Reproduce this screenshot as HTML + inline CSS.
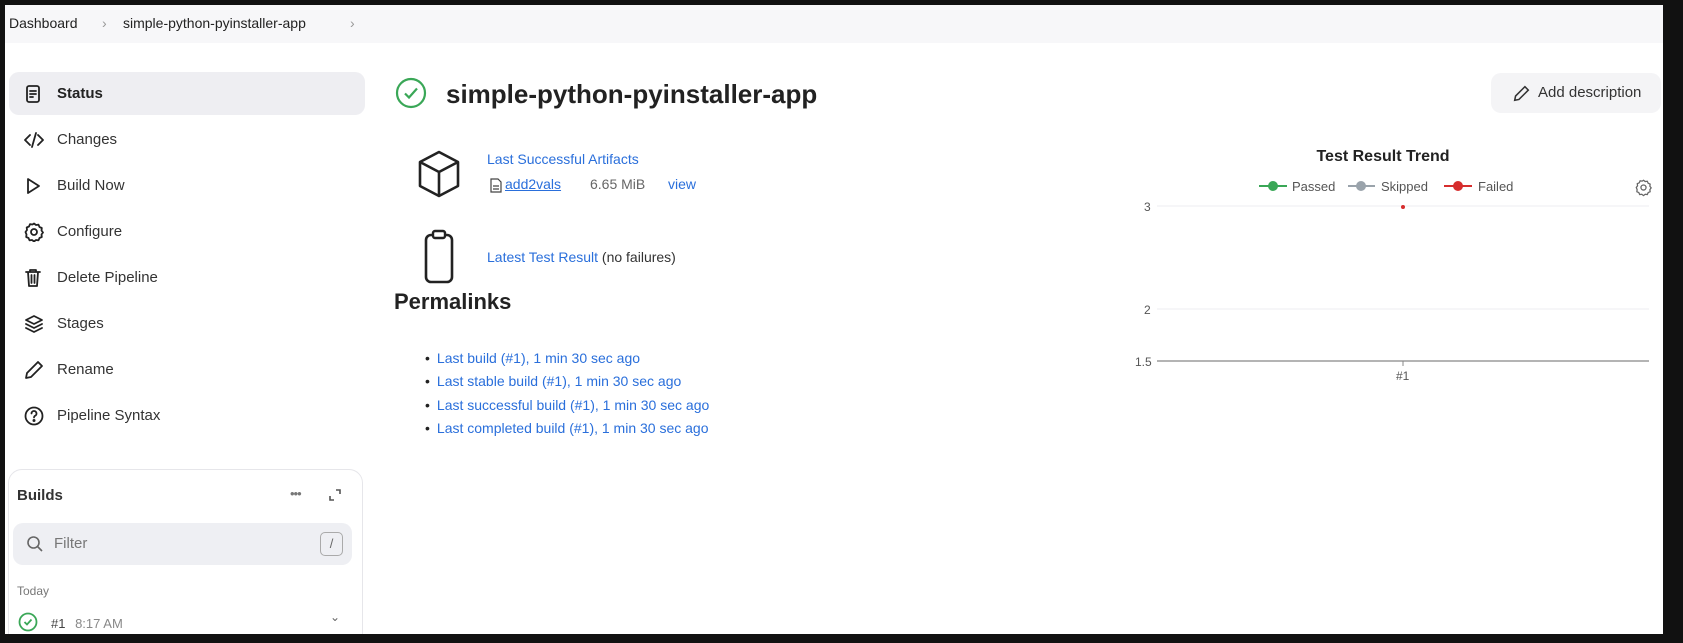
<!DOCTYPE html>
<html><head><meta charset="utf-8"><style>
*{box-sizing:border-box;margin:0;padding:0}
body{width:1683px;height:643px;background:#111;font-family:"Liberation Sans",sans-serif;color:#222;position:relative;overflow:hidden}
.page{position:absolute;left:5px;top:5px;width:1658px;height:629px;background:#fff;overflow:hidden}
.abs{position:absolute}
.bc{position:absolute;left:0;top:0;width:100%;height:38px;background:#f7f7f9;font-size:14px;color:#222}
.bc span{position:absolute;top:10px}
.nav{position:absolute;left:4px;width:356px;height:43px;display:flex;align-items:center;font-size:15px;color:#333}
.nav svg{position:absolute;left:15px}
.nav .t{position:absolute;left:48px}
a,.lk{color:#2a6fdb;text-decoration:none}
.ic{fill:none;stroke:#222;stroke-width:1.8;stroke-linecap:round;stroke-linejoin:round}
</style></head><body>
<div class="page">
<div class="bc"><span style="left:4px">Dashboard</span><span style="left:97px;color:#999">&#8250;</span><span style="left:118px">simple-python-pyinstaller-app</span><span style="left:345px;color:#999">&#8250;</span></div>

<div class="abs" style="left:4px;top:67px;width:356px;height:43px;background:#eeeef2;border-radius:10px"></div>
<div class="nav" style="top:67px"><svg width="18" height="20" viewBox="0 0 18 20" class="ic"><rect x="3" y="2" width="12" height="16" rx="2"/><path d="M6 7h6M6 10h6M6 13h3"/></svg><span class="t" style="font-weight:bold;color:#222">Status</span></div>
<div class="nav" style="top:113px"><svg width="20" height="20" viewBox="0 0 20 20" class="ic"><path d="M6 5L1 10l5 5M14 5l5 5-5 5M12 3L8 17"/></svg><span class="t">Changes</span></div>
<div class="nav" style="top:159px"><svg width="18" height="20" viewBox="0 0 18 20" class="ic"><path d="M4 3l11 7-11 7z"/></svg><span class="t">Build Now</span></div>
<div class="nav" style="top:205px"><svg width="20" height="20" viewBox="0 0 20 20" class="ic"><path d="M10 1.5l2 1.5 2.5-.3 1 2.3 2.3 1-.3 2.5 1.5 2-1.5 2 .3 2.5-2.3 1-1 2.3-2.5-.3-2 1.5-2-1.5-2.5.3-1-2.3-2.3-1 .3-2.5L1.5 10 3 8l-.3-2.5 2.3-1 1-2.3 2.5.3z"/><circle cx="10" cy="10" r="3"/></svg><span class="t">Configure</span></div>
<div class="nav" style="top:251px"><svg width="18" height="20" viewBox="0 0 18 20" class="ic"><path d="M2 4h14M6 4V2h6v2M4 4l1 14h8l1-14M7.5 7v8M10.5 7v8"/></svg><span class="t">Delete Pipeline</span></div>
<div class="nav" style="top:297px"><svg width="20" height="20" viewBox="0 0 20 20" class="ic"><path d="M10 2l8 4-8 4-8-4zM2 10l8 4 8-4M2 14l8 4 8-4"/></svg><span class="t">Stages</span></div>
<div class="nav" style="top:343px"><svg width="20" height="20" viewBox="0 0 20 20" class="ic"><path d="M14 2l4 4L7 17l-5 1 1-5z"/></svg><span class="t">Rename</span></div>
<div class="nav" style="top:389px"><svg width="20" height="20" viewBox="0 0 20 20" class="ic"><circle cx="10" cy="10" r="8.5"/><path d="M7.5 7.5a2.5 2.5 0 1 1 3.5 2.3c-.7.4-1 .9-1 1.7"/><circle cx="10" cy="14.5" r=".6" fill="#222"/></svg><span class="t">Pipeline Syntax</span></div>

<div class="abs" style="left:3px;top:464px;width:355px;height:200px;border:1px solid #e6e6ea;border-radius:14px"></div>
<div class="abs" style="left:12px;top:482px;font-size:15px;font-weight:bold;color:#333">Builds</div>
<div class="abs" style="left:285px;top:481px;font-size:13px;color:#777;letter-spacing:-1px">&#8226;&#8226;&#8226;</div>
<svg class="abs" style="left:323px;top:483px" width="14" height="14" viewBox="0 0 14 14"><path d="M8 2h4v4M6 12H2V8" fill="none" stroke="#555" stroke-width="1.6"/></svg>
<div class="abs" style="left:8px;top:518px;width:339px;height:42px;background:#eeeff3;border-radius:10px"></div>
<svg class="abs" style="left:21px;top:530px" width="18" height="18" viewBox="0 0 18 18"><circle cx="7.5" cy="7.5" r="5.5" fill="none" stroke="#666" stroke-width="1.6"/><path d="M11.5 11.5L16 16" stroke="#666" stroke-width="1.6"/></svg>
<div class="abs" style="left:49px;top:530px;font-size:15px;color:#777">Filter</div>
<div class="abs" style="left:315px;top:527px;width:23px;height:24px;border:1.5px solid #aaa;border-radius:5px;font-size:13px;color:#666;text-align:center;line-height:21px">/</div>
<div class="abs" style="left:12px;top:579px;font-size:12px;color:#777">Today</div>
<svg class="abs" style="left:13px;top:607px" width="20" height="20" viewBox="0 0 20 20"><circle cx="10" cy="10" r="8.5" fill="none" stroke="#3aa757" stroke-width="1.8"/><path d="M6.5 10l2.5 2.5 4.5-5" fill="none" stroke="#3aa757" stroke-width="1.8"/></svg>
<div class="abs" style="left:46px;top:611px;font-size:13px;color:#444">#1 <span style="color:#888;margin-left:6px">8:17 AM</span></div>
<div class="abs" style="left:325px;top:605px;font-size:12px;color:#666">&#8964;</div>

<svg class="abs" style="left:390px;top:72px" width="32" height="32" viewBox="0 0 32 32"><circle cx="16" cy="16" r="14" fill="none" stroke="#3aa757" stroke-width="2.2"/><path d="M10 16.5l4 4 8-9" fill="none" stroke="#3aa757" stroke-width="2.2"/></svg>
<div class="abs" style="left:441px;top:74px;font-size:26px;font-weight:bold;color:#222">simple-python-pyinstaller-app</div>
<div class="abs" style="left:1486px;top:68px;width:170px;height:40px;background:#f4f4f6;border-radius:10px"></div>
<svg class="abs" style="left:1508px;top:80px" width="17" height="17" viewBox="0 0 20 20" class="ic"><path d="M14 2l4 4L7 17l-5 1 1-5z" fill="none" stroke="#333" stroke-width="1.8"/></svg>
<div class="abs" style="left:1533px;top:79px;font-size:15px;color:#333">Add description</div>

<svg class="abs" style="left:411px;top:144px" width="46" height="50" viewBox="0 0 46 50"><path d="M23 3L42 13v24L23 47 4 37V13zM4 13l19 10 19-10M23 23v24" fill="none" stroke="#222" stroke-width="2.6" stroke-linejoin="round"/></svg>
<div class="abs lk" style="left:482px;top:146px;font-size:14px">Last Successful Artifacts</div>
<svg class="abs" style="left:485px;top:173px" width="12" height="15" viewBox="0 0 12 15"><path d="M1 1h7l3 3v10H1zM3 8h6M3 11h6" fill="none" stroke="#444" stroke-width="1.2"/></svg>
<div class="abs lk" style="left:500px;top:171px;font-size:14px;text-decoration:underline">add2vals</div>
<div class="abs" style="left:585px;top:171px;font-size:14px;color:#666">6.65 MiB</div>
<div class="abs lk" style="left:663px;top:171px;font-size:14px">view</div>

<svg class="abs" style="left:418px;top:224px" width="32" height="56" viewBox="0 0 32 56"><rect x="3" y="6" width="26" height="47" rx="5" fill="none" stroke="#222" stroke-width="2.6"/><rect x="10" y="2" width="12" height="7" rx="2" fill="#fff" stroke="#222" stroke-width="2.4"/></svg>
<div class="abs" style="left:482px;top:244px;font-size:14px;color:#333"><span class="lk">Latest Test Result</span> (no failures)</div>
<div class="abs" style="left:389px;top:284px;font-size:22px;font-weight:bold;color:#222">Permalinks</div>
<div class="abs" style="left:420px;top:342px;font-size:14px;line-height:23.3px">
<div><span style="color:#222;margin-right:7px">&#8226;</span><span class="lk">Last build (#1), 1 min 30 sec ago</span></div>
<div><span style="color:#222;margin-right:7px">&#8226;</span><span class="lk">Last stable build (#1), 1 min 30 sec ago</span></div>
<div><span style="color:#222;margin-right:7px">&#8226;</span><span class="lk">Last successful build (#1), 1 min 30 sec ago</span></div>
<div><span style="color:#222;margin-right:7px">&#8226;</span><span class="lk">Last completed build (#1), 1 min 30 sec ago</span></div>
</div>

<div class="abs" style="left:1278px;top:143px;width:200px;text-align:center;font-size:16px;font-weight:bold;color:#222">Test Result Trend</div>
<svg class="abs" style="left:1100px;top:165px" width="560" height="210">
<g font-family="Liberation Sans" font-size="13" fill="#555">
<line x1="154" y1="16" x2="182" y2="16" stroke="#3aa757" stroke-width="2"/><circle cx="168" cy="16" r="5" fill="#3aa757"/><text x="187" y="21">Passed</text>
<line x1="243" y1="16" x2="270" y2="16" stroke="#9aa3ab" stroke-width="2"/><circle cx="256" cy="16" r="5" fill="#9aa3ab"/><text x="276" y="21">Skipped</text>
<line x1="339" y1="16" x2="367" y2="16" stroke="#d62d2d" stroke-width="2"/><circle cx="353" cy="16" r="5" fill="#d62d2d"/><text x="373" y="21">Failed</text>
<line x1="52" y1="36" x2="544" y2="36" stroke="#eceef2"/>
<line x1="52" y1="139" x2="544" y2="139" stroke="#eceef2"/>
<line x1="52" y1="191" x2="544" y2="191" stroke="#888" stroke-width="1.3"/>
<line x1="298" y1="191" x2="298" y2="196" stroke="#888"/>
<text x="39" y="41" font-size="12">3</text><text x="39" y="144" font-size="12">2</text><text x="30" y="196" font-size="12">1.5</text>
<text x="291" y="210" font-size="12">#1</text>
<circle cx="298" cy="37" r="2" fill="#d62d2d"/>
</g>
<g transform="translate(530,9) scale(0.85)"><path d="M10 1.5l2 1.5 2.5-.3 1 2.3 2.3 1-.3 2.5 1.5 2-1.5 2 .3 2.5-2.3 1-1 2.3-2.5-.3-2 1.5-2-1.5-2.5.3-1-2.3-2.3-1 .3-2.5L1.5 10 3 8l-.3-2.5 2.3-1 1-2.3 2.5.3z" fill="none" stroke="#666" stroke-width="1.5"/><circle cx="10" cy="10" r="3" fill="none" stroke="#666" stroke-width="1.5"/></g>
</svg>
</div>
</body></html>
